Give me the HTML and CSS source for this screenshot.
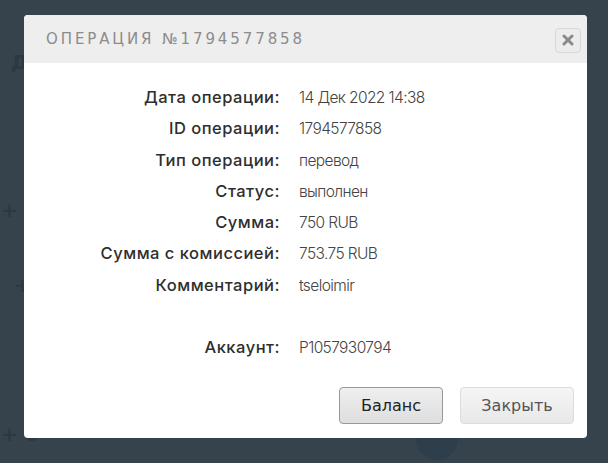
FILE: index.html
```html
<!DOCTYPE html>
<html lang="ru">
<head>
<meta charset="utf-8">
<title>Операция</title>
<link rel="stylesheet" href="styles.css">
</head>
<body>
<div class="backdrop">
  <span class="bg-text bg-t1">Д</span>
  <span class="bg-text bg-t2">+ 68</span>
  <span class="bg-text bg-t3">+</span>
  <span class="bg-text bg-t4">+ 6</span>
  <span class="bg-circle"></span>
</div>
<div class="dialog">
  <div class="dialog-header">
    <h1 class="dialog-title">ОПЕРАЦИЯ №1794577858</h1>
    <button class="close-btn" aria-label="Закрыть">
      <svg width="12" height="12" viewBox="0 0 12 12"><path d="M2 2L10 10M10 2L2 10" stroke="#8a8a8a" stroke-width="3" stroke-linecap="round"/></svg>
    </button>
  </div>
  <div class="dialog-body">
    <dl class="details">
      <dt>Дата операции:</dt><dd>14 Дек 2022 14:38</dd>
      <dt>ID операции:</dt><dd>1794577858</dd>
      <dt>Тип операции:</dt><dd>перевод</dd>
      <dt>Статус:</dt><dd>выполнен</dd>
      <dt>Сумма:</dt><dd>750 RUB</dd>
      <dt>Сумма с комиссией:</dt><dd>753.75 RUB</dd>
      <dt>Комментарий:</dt><dd>tseloimir</dd>
      <dt class="gap">Аккаунт:</dt><dd class="gap">P1057930794</dd>
    </dl>
  </div>
  <div class="dialog-footer">
    <button class="btn btn-primary">Баланс</button>
    <button class="btn btn-light">Закрыть</button>
  </div>
</div>
</body>
</html>
```
FILE: styles.css
```css
html, body {
  margin: 0;
  padding: 0;
  width: 608px;
  height: 463px;
  overflow: hidden;
  background: #36434c;
}
body {
  position: relative;
  font-family: "Inter", sans-serif;
}
.backdrop { position: absolute; inset: 0; }
.bg-text {
  position: absolute;
  color: #2d3840;
  font-family: "DejaVu Sans", sans-serif;
  font-size: 20px;
  font-weight: bold;
}
.bg-t1 { left: 11px; top: 50px; }
.bg-t2 { left: 1px; top: 198px; }
.bg-t3 { left: 14px; top: 273px; }
.bg-t4 { left: 1px; top: 422px; }
.bg-circle {
  position: absolute;
  left: 416px; top: 418px;
  width: 42px; height: 42px;
  border-radius: 50%;
  background: #2e3e4b;
}
.dialog {
  position: absolute;
  left: 24px;
  top: 15px;
  width: 563px;
  height: 423px;
  background: #fff;
  border-radius: 4px;
  overflow: hidden;
  display: flex;
  flex-direction: column;
}
.dialog-header {
  height: 48px;
  background: #eeeeee;
  display: flex;
  align-items: center;
  justify-content: space-between;
  padding: 0 6px 0 22px;
  flex: none;
}
.dialog-title {
  margin: 0;
  font-family: "DejaVu Sans", sans-serif;
  font-weight: normal;
  font-size: 15px;
  letter-spacing: 2.9px;
  color: #8c8c8c;
}
.close-btn {
  width: 26px;
  height: 25px;
  margin-top: 2px;
  border: 1px solid #d8d8d8;
  border-radius: 4px;
  background: #ececec;
  display: flex;
  align-items: center;
  justify-content: center;
  padding: 0;
}
.dialog-body {
  flex: 1;
  padding-top: 19px;
}
.details {
  margin: 0;
  display: grid;
  grid-template-columns: 256px 1fr;
  column-gap: 19px;
  row-gap: 0;
  line-height: 31.3px;
}
.details dt {
  text-align: right;
  color: #2e2e2e;
  font-weight: 500;
  font-size: 16.5px;
  letter-spacing: 0.5px;
}
.details dd {
  margin: 0;
  color: #444;
  font-weight: 300;
  font-size: 15.5px;
  letter-spacing: -0.6px;
}
.details .gap { margin-top: 31px; }
.dialog-footer {
  display: flex;
  justify-content: flex-end;
  gap: 17px;
  padding: 0 13px 14px 0;
}
.btn {
  height: 37px;
  font-family: "DejaVu Sans", sans-serif;
  font-size: 16px;
  border-radius: 4px;
  padding: 0;
}
.btn-primary {
  width: 104px;
  color: #222;
  border: 1px solid #999;
  background: linear-gradient(#efefef, #dedede);
}
.btn-light {
  width: 114px;
  color: #555;
  border: 1px solid #dcdcdc;
  background: linear-gradient(#f5f5f5, #e8e8e8);
}
```
